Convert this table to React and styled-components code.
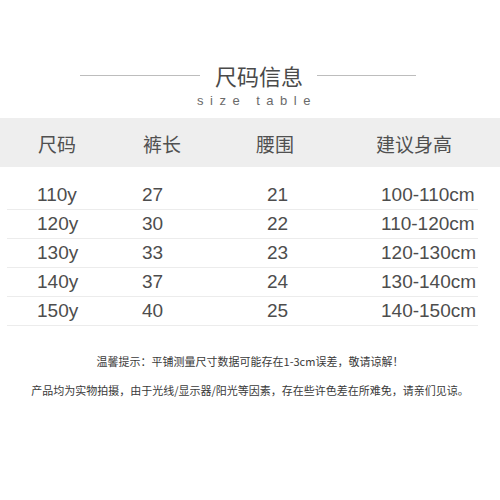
import React from 'react';
import styled, { createGlobalStyle } from 'styled-components';

const sizes = [
  ['110y', '27', '21', '100-110cm'],
  ['120y', '30', '22', '110-120cm'],
  ['130y', '33', '23', '120-130cm'],
  ['140y', '37', '24', '130-140cm'],
  ['150y', '40', '25', '140-150cm'],
];

const headers = ['尺码', '裤长', '腰围', '建议身高'];

const App = () => {
  return (
    <Page>
      <GlobalStyle />
      <TitleRow>
        <Rule $width={120} />
        <Title>尺码信息</Title>
        <Rule $width={99} />
      </TitleRow>
      <Subtitle>size table</Subtitle>
      <HeaderBand>
        {headers.map((h) => (
          <HeaderCell key={h}>{h}</HeaderCell>
        ))}
      </HeaderBand>
      <Rows>
        {sizes.map((row) => (
          <Row key={row[0]}>
            {row.map((cell, i) => (
              <Cell key={i}>{cell}</Cell>
            ))}
          </Row>
        ))}
      </Rows>
      <Notes>
        <Note>温馨提示：平铺测量尺寸数据可能存在1-3cm误差，敬请谅解！</Note>
        <Note>产品均为实物拍摄，由于光线/显示器/阳光等因素，存在些许色差在所难免，请亲们见谅。</Note>
      </Notes>
    </Page>
  );
};

const GlobalStyle = createGlobalStyle`
  html, body {
    margin: 0;
    padding: 0;
    background: #fff;
  }
  body {
    font-family: "Liberation Sans", "Noto Sans CJK SC", sans-serif;
  }
`;

const Page = styled.div`
  width: 500px;
  height: 500px;
  display: flex;
  flex-direction: column;
  padding-top: 62px;
  box-sizing: border-box;
  overflow: hidden;
`;

const TitleRow = styled.div`
  display: flex;
  align-items: center;
  padding-left: 80px;
  height: 26px;
`;

const Rule = styled.div`
  width: ${(p) => p.$width}px;
  height: 1px;
  background: #bdbdbd;
`;

const Title = styled.h1`
  margin: 0 14px 0 15px;
  font-family: "Noto Sans CJK SC", sans-serif;
  font-size: 22px;
  font-weight: 400;
  line-height: 26px;
  color: #4a4a4a;
`;

const Subtitle = styled.div`
  margin-top: 5px;
  text-align: center;
  padding-left: 14px;
  font-family: "Liberation Sans", sans-serif;
  font-size: 13px;
  line-height: 16px;
  letter-spacing: 6.5px;
  color: #6a6a6a;
`;

const HeaderBand = styled.div`
  margin-top: 9px;
  height: 49px;
  background: #eeeeee;
  display: grid;
  grid-template-columns: 105px 113px 120px auto;
  align-items: center;
  padding: 3px 0 0 38px;
  box-sizing: border-box;
`;

const HeaderCell = styled.div`
  font-family: "Noto Sans CJK SC", sans-serif;
  font-size: 19px;
  line-height: 22px;
  color: #505050;
`;

const Rows = styled.div`
  margin: 14px 22px 0 7px;
  display: flex;
  flex-direction: column;
`;

const Row = styled.div`
  height: 28px;
  border-bottom: 1px solid #ececec;
  display: grid;
  grid-template-columns: 105px 125px 114px auto;
  align-items: center;
  padding-left: 30px;
`;

const Cell = styled.div`
  font-family: "Liberation Sans", Arial, sans-serif;
  font-size: 19px;
  line-height: 22px;
  color: #4d4d4d;
  white-space: nowrap;
`;

const Notes = styled.div`
  margin-top: 21px;
  display: flex;
  flex-direction: column;
  align-items: center;
`;

const Note = styled.p`
  margin: 0;
  font-family: "Noto Sans CJK SC", sans-serif;
  font-size: 11px;
  line-height: 29px;
  color: #3a3a3a;
  white-space: nowrap;
`;

export default App;
